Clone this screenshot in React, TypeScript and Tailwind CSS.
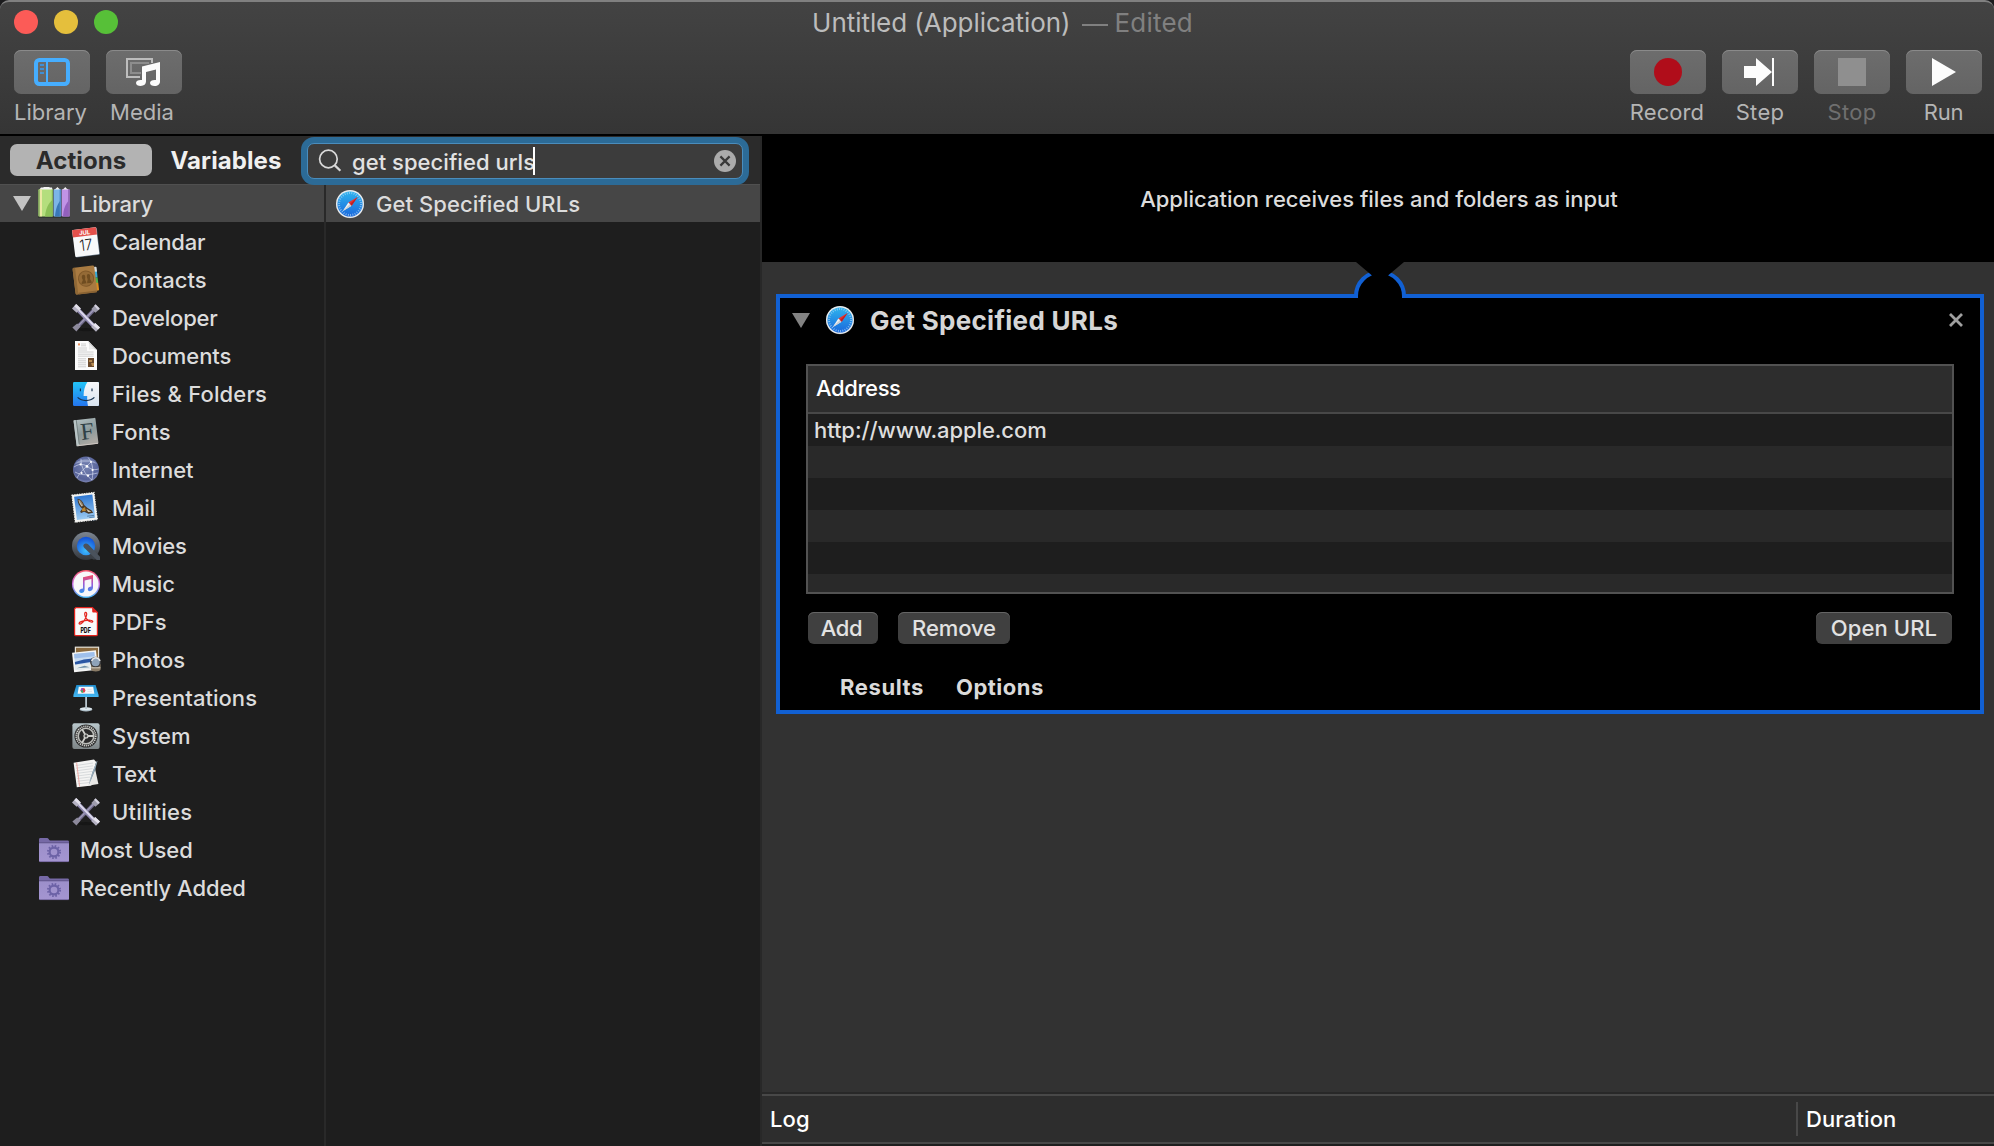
import React from "react";

const iconClass = "h-7 w-7 shrink-0 overflow-visible";

function SafariIcon() {
  return (
    <svg viewBox="0 0 28 28" className={iconClass}>
      <defs>
        <linearGradient id="safariFill" x1="0" y1="0" x2="0" y2="1">
          <stop offset="0" stopColor="#2fb4ee" />
          <stop offset="1" stopColor="#1a68dc" />
        </linearGradient>
      </defs>
      <circle cx="14" cy="14.4" r="14" fill="#8d8d8d" opacity="0.35" />
      <circle cx="14" cy="14" r="14" fill="#e9edf0" />
      <circle cx="14" cy="14" r="12.6" fill="url(#safariFill)" />
      <circle cx="14" cy="14" r="11" fill="none" stroke="#a9d4f5" strokeWidth="2" strokeDasharray="0.9 1.4" opacity="0.75" />
      <path d="M21.6 7 L15.6 15.7 L12.4 12.4 Z" fill="#e8352f" />
      <path d="M6.6 21.2 L12.4 12.4 L15.6 15.7 Z" fill="#f2f2f2" />
      <path d="M6.6 21.2 L14 14 L15.6 15.7 Z" fill="#c9ced4" />
      <path d="M21.6 7 L14 14 L15.6 15.7 Z" fill="#c01f25" />
    </svg>
  );
}

function BooksIcon() {
  return (
    <svg viewBox="0 0 32 32" className="h-8 w-8 shrink-0 overflow-visible">
      <rect x="0" y="28" width="32" height="2" fill="#262b26" opacity="0.6" />
      <path d="M1 2 L3 -0.4 H5 L6 -1 H11 L12 -0.4 H14 L14.6 2 Z" fill="#f4f4f4" />
      <path d="M15.6 2 L18 0.4 L19.4 -1 L21 0.6 L22.6 2 Z M23.5 2 L26 0.4 L27.2 -1 L28.6 0.6 L31 2 Z" fill="#f4f4f4" />
      <rect x="0.4" y="1.4" width="14.6" height="27" rx="0.8" fill="#b4de7d" />
      <rect x="0.4" y="1.4" width="1.4" height="27" fill="#7ea35a" />
      <rect x="1.8" y="1.4" width="2.2" height="27" fill="#ece9a4" />
      <path d="M14.4 12 C10.5 15 7.6 21 7 28.4 H14.4 Z" fill="#8cc057" />
      <rect x="13.8" y="1.4" width="1.2" height="27" fill="#86b358" />
      <rect x="15.6" y="1.4" width="7.4" height="27" rx="0.6" fill="#7cb5e8" />
      <path d="M22 13 C19.5 16 17.6 21 17 28.4 H22 Z" fill="#3a78b8" />
      <rect x="21.6" y="1.4" width="1.6" height="27" fill="#4d8cc9" />
      <rect x="23.7" y="1.4" width="8" height="27" rx="0.6" fill="#c193e6" />
      <path d="M30.4 13 C27.6 16 25.4 21 25 28.4 H30.4 Z" fill="#9360be" />
      <rect x="30.2" y="1.4" width="1.5" height="27" fill="#8d63b2" />
    </svg>
  );
}

function CalendarIcon() {
  return (
    <svg viewBox="0 0 28 28" className={iconClass}>
      <g transform="rotate(-7 14 14)">
        <rect x="2" y="0.8" width="24.4" height="27.4" rx="1" fill="#5d6f80" />
        <rect x="1.6" y="0.4" width="24.2" height="27.2" rx="1" fill="#f8f9fa" />
        <path d="M1.6 1.4 a1 1 0 0 1 1-1 h22.2 a1 1 0 0 1 1 1 V8 H1.6 Z" fill="#e4504b" />
        <text x="13.7" y="6.6" textAnchor="middle" fontFamily="Inter" fontSize="6" fontWeight="700" fill="#fff">JUL</text>
        <text x="13.7" y="22.4" textAnchor="middle" fontFamily="Inter" fontSize="15.5" fontWeight="300" fill="#222" textLength="13" lengthAdjust="spacingAndGlyphs">17</text>
      </g>
    </svg>
  );
}

function ContactsIcon() {
  return (
    <svg viewBox="0 0 28 28" className={iconClass}>
      <g transform="rotate(-7 14 14)">
        <rect x="20" y="2" width="6" height="6" rx="1" fill="#d9dfe2" />
        <rect x="20" y="7" width="5.8" height="6" fill="#39a9d8" />
        <rect x="20" y="13" width="5.8" height="6" fill="#4fb04a" />
        <rect x="20" y="18" width="5.8" height="8" rx="1" fill="#d98d22" />
        <rect x="2" y="0.4" width="21.8" height="27" rx="1.6" fill="#a87a41" />
        <rect x="2" y="0.4" width="2.6" height="27" rx="1.2" fill="#8f6836" />
        <rect x="5" y="25.8" width="18.6" height="1.6" fill="#8a6333" />
        <circle cx="14.2" cy="12.6" r="7.6" fill="#946a36" stroke="#80592a" strokeWidth="1" />
        <path d="M9.2 17.4 C9.2 15 11.2 14.6 10.8 13 C9.6 10.6 10.4 8.4 12 8.4 C13.6 8.4 14.2 10.4 13.2 13 C13 14.6 14 15 14 17.4 Z" fill="#6f4c20" />
        <path d="M14.8 17.4 C14.8 15 16 14.6 15.6 13 C14.8 10.6 15.4 8.4 16.8 8.4 C18.6 8.4 19.2 10.4 18.2 13 C18 14.6 19.6 15 19.4 17.4 Z" fill="#6f4c20" />
      </g>
    </svg>
  );
}

function ToolsIcon() {
  return (
    <svg viewBox="0 0 28 28" className={iconClass}>
      <ellipse cx="14" cy="25.6" rx="9" ry="1.6" fill="#111" opacity="0.6" />
      <path d="M5 23.4 L23 4.8" stroke="#6f6a8a" strokeWidth="3.6" />
      <path d="M5 23 L23 4.4" stroke="#a09bb8" strokeWidth="1.4" />
      <path d="M0.4 23.6 L5.2 19.4 L8.6 22.6 L4.4 27.4 Z" fill="#8d8a9c" />
      <path d="M19.4 5 L23.4 0.4 L27.8 5 L23.4 8.8 Z" fill="#9d9bab" />
      <path d="M23.6 0.2 L27.8 4.4 L26 6 L22.2 1.8 Z" fill="#d3d1dd" />
      <path d="M5 4.8 L23 23.4" stroke="#8e88ae" strokeWidth="4.2" />
      <path d="M5.4 4.4 L23.4 23" stroke="#dcd9ec" strokeWidth="2" />
      <path d="M0 4.4 L4.2 0 L8.8 4.6 L4.6 8.8 Z" fill="#b4b1c2" />
      <path d="M2.2 2.2 L4.2 0 L8.8 4.6 L7 6.4 Z" fill="#e2e0ea" />
      <path d="M19.2 23 L23.2 19 L28 23.6 L24 27.8 Z" fill="#b4b1c2" />
      <path d="M21 21.2 L23.2 19 L28 23.6 L26 25.6 Z" fill="#e6e4ee" />
    </svg>
  );
}

function DocumentsIcon() {
  return (
    <svg viewBox="0 0 28 28" className={iconClass}>
      <path d="M3 -1 H16.4 L25 8 V28 H3 Z" fill="#fbfbfb" />
      <path d="M16 -1 L25 8 C21 6.4 19.4 6.6 17.4 7.4 C18 4.4 17.6 2 16 -1 Z" fill="#cfcfcf" />
      <path d="M17.2 1.4 C18 4 18 5.4 17.4 7.4 C19.6 6.6 21 6.6 23 7.2 Z" fill="#efefef" />
      <rect x="6" y="1.4" width="2" height="2" fill="#e8915c" />
      <path d="M9 2 H14 M9 3.8 H14 M6 6 H15 M6 8 H15 M6 10 H21.6 M6 12.2 H21.6 M6 14.2 H21.6 M6 16.8 H14 M6 18.8 H14 M6 20.8 H14 M6 22.8 H14 M6 24.8 H14" stroke="#cbcbcb" strokeWidth="0.9" />
      <rect x="16" y="16" width="6" height="9" fill="#6b4a2d" />
      <path d="M17 18 h3 v2 h-3 Z M19 21 h3 v3 h-2 Z" fill="#b58a50" />
    </svg>
  );
}

function FinderIcon() {
  return (
    <svg viewBox="0 0 28 28" className={iconClass}>
      <defs>
        <linearGradient id="finderBlue" x1="0" y1="0" x2="0" y2="1">
          <stop offset="0" stopColor="#23c4f7" />
          <stop offset="1" stopColor="#2475ee" />
        </linearGradient>
        <linearGradient id="finderWhite" x1="0" y1="0" x2="0" y2="1">
          <stop offset="0" stopColor="#f7f8fa" />
          <stop offset="1" stopColor="#d8e3ef" />
        </linearGradient>
      </defs>
      <rect x="1" y="2" width="26" height="24" rx="1.2" fill="url(#finderBlue)" />
      <path d="M15.4 2 H25.8 a1.2 1.2 0 0 1 1.2 1.2 V24.8 a1.2 1.2 0 0 1 -1.2 1.2 H16 C15.4 23 15 20 15.2 16 H11.6 C11.6 10.6 12.8 6 15.4 2 Z" fill="url(#finderWhite)" />
      <path d="M8.4 8.6 V11.2" stroke="#16324f" strokeWidth="1.2" />
      <path d="M20 8.6 V11.2" stroke="#16324f" strokeWidth="1.2" />
      <path d="M5.6 17.4 C10 21.6 18 21.6 22.4 17.4" fill="none" stroke="#16324f" strokeWidth="1.2" />
    </svg>
  );
}

function FontsIcon() {
  return (
    <svg viewBox="0 0 28 28" className={iconClass}>
      <defs>
        <linearGradient id="fontBook" x1="0" y1="0" x2="0.3" y2="1">
          <stop offset="0" stopColor="#b3c0c2" />
          <stop offset="0.6" stopColor="#8b999a" />
          <stop offset="1" stopColor="#a9a7a2" />
        </linearGradient>
      </defs>
      <g transform="rotate(-7 14 14)">
        <rect x="3" y="1" width="22" height="26" rx="1" fill="url(#fontBook)" />
        <rect x="3" y="1" width="2.6" height="26" fill="#b9c5c6" />
        <path d="M5.8 1 V25" stroke="#6c797a" strokeWidth="0.8" />
        <path d="M4 26.6 H24.6" stroke="#cfc7c2" strokeWidth="1" />
        <text x="15.2" y="21.4" textAnchor="middle" fontFamily="Liberation Serif" fontSize="24" fill="#2f4146" textLength="13.4" lengthAdjust="spacingAndGlyphs">F</text>
      </g>
    </svg>
  );
}

function InternetIcon() {
  return (
    <svg viewBox="0 0 28 28" className={iconClass}>
      <defs>
        <radialGradient id="globeFill" cx="0.5" cy="0.4" r="0.7">
          <stop offset="0" stopColor="#7784b2" />
          <stop offset="0.7" stopColor="#57639a" />
          <stop offset="1" stopColor="#a2a5c8" />
        </radialGradient>
      </defs>
      <circle cx="14" cy="13.4" r="13" fill="url(#globeFill)" />
      <path d="M3 8 C7 2 21 2 25 8 C21 5.6 8 6 3 8 Z" fill="#a9b4d4" opacity="0.7" />
      <path d="M2 11 C8 7 12 8 16 11 C20 14 23 14 26.6 13 M5 22 C8 16 12 13 20 5 M9 3 C9 10 12 18 20 24 M3 16 C10 20 17 19 25.6 17 M16 1.4 C20 6 22 12 20 24" fill="none" stroke="#d9e0f4" strokeWidth="0.8" opacity="0.8" />
      <g fill="#fff">
        <circle cx="15" cy="10.4" r="1.3" /><circle cx="8.6" cy="8.4" r="1.1" /><circle cx="20.6" cy="14" r="1.1" />
        <circle cx="9.6" cy="17" r="1" /><circle cx="16" cy="19.6" r="1.2" /><circle cx="19" cy="6" r="0.9" />
      </g>
    </svg>
  );
}

function MailIcon() {
  return (
    <svg viewBox="0 0 28 28" className={iconClass}>
      <defs>
        <linearGradient id="mailSky" x1="0" y1="0" x2="0" y2="1">
          <stop offset="0" stopColor="#2f78d2" />
          <stop offset="1" stopColor="#9dcbf2" />
        </linearGradient>
      </defs>
      <circle cx="20.6" cy="20.4" r="6.4" fill="none" stroke="#1c2a3a" strokeWidth="1" />
      <g transform="rotate(-7 13 13)">
        <rect x="1.4" y="-0.4" width="22.4" height="27.4" fill="#f3f3f0" stroke="#f3f3f0" strokeWidth="1" strokeDasharray="1.4 1" />
        <rect x="3.4" y="1.6" width="18.4" height="23.4" fill="url(#mailSky)" />
        <path d="M6.6 4 C9.4 4.4 11.6 7 12.4 11 L15.4 14.4 L19 17 L20.4 19.6 L15.6 20 L11.6 17.6 L8.4 18.4 L7.6 17 L10 14.4 C7.4 11.6 6 7.6 6.6 4 Z" fill="#4a3825" />
        <path d="M7.4 5 C9.8 6 11 8.6 11.4 11.6 L9.8 12 C8.4 10 7.4 8 7.4 5 Z M14 15 L18.8 18.4 L15.4 18.4 Z" fill="#cfc5b0" />
        <path d="M8.4 5.8 L10.8 11.4 M9.6 6.6 L11.6 11" stroke="#6a563c" strokeWidth="0.6" />
        <path d="M9.8 14.4 L13 13 L13.4 17 L9.6 16.8 Z" fill="#b9842f" />
        <path d="M14 22.4 H21 M16 24 H21" stroke="#537ca6" strokeWidth="0.9" />
      </g>
    </svg>
  );
}

function MoviesIcon() {
  return (
    <svg viewBox="0 0 28 28" className={iconClass}>
      <defs>
        <linearGradient id="qtRing" x1="0" y1="0" x2="0" y2="1">
          <stop offset="0" stopColor="#7c8591" />
          <stop offset="1" stopColor="#33373d" />
        </linearGradient>
        <radialGradient id="qtBlue" cx="0.5" cy="0.75" r="0.7">
          <stop offset="0" stopColor="#3fc0ff" />
          <stop offset="1" stopColor="#1554d8" />
        </radialGradient>
      </defs>
      <circle cx="14" cy="14" r="14" fill="url(#qtRing)" />
      <path d="M20 19 L28 27.6 H21 L15 22 Z" fill="#3b4047" />
      <circle cx="14" cy="14" r="9.2" fill="url(#qtBlue)" />
      <path d="M11.8 12.6 C13 11 15 11.2 16.4 12.6 L28 24.8 V28 H24.8 L12.2 15.8 C11.2 14.6 11 13.6 11.8 12.6 Z" fill="#4a525c" />
    </svg>
  );
}

function MusicIcon() {
  return (
    <svg viewBox="0 0 28 28" className={iconClass}>
      <defs>
        <linearGradient id="musicRing" x1="0.5" y1="0" x2="0.5" y2="1">
          <stop offset="0" stopColor="#fb5b6c" />
          <stop offset="0.5" stopColor="#c56be6" />
          <stop offset="1" stopColor="#3fb7f3" />
        </linearGradient>
        <linearGradient id="musicNote" x1="0.5" y1="0" x2="0.5" y2="1">
          <stop offset="0" stopColor="#f4495f" />
          <stop offset="0.5" stopColor="#9a5ad8" />
          <stop offset="1" stopColor="#2f95f0" />
        </linearGradient>
      </defs>
      <circle cx="14" cy="14" r="14" fill="url(#musicRing)" />
      <circle cx="14" cy="14" r="12.6" fill="#f7f7fa" />
      <path d="M11 7.2 L21 5 V17.6 C21 19.8 19.4 21.2 17.8 21.2 C16.6 21.2 15.8 20.2 15.8 19.2 C15.8 17.6 17.6 16.9 19.4 16.6 V9 L12.6 10.6 V19.4 C12.6 21.6 11 23 9.4 23 C8.2 23 7.2 22 7.2 21 C7.2 19.4 9 18.7 11 18.4 Z" fill="url(#musicNote)" />
    </svg>
  );
}

function PdfIcon() {
  return (
    <svg viewBox="0 0 28 28" className={iconClass}>
      <path d="M4 -0.4 H20.4 L25.4 4.6 V26.6 a1 1 0 0 1 -1 1 H3.6 a1 1 0 0 1 -1 -1 V0.8 Z" fill="#fafafa" stroke="#e3231d" strokeWidth="1.2" />
      <path d="M20.2 -0.4 V3.6 a1 1 0 0 0 1 1 H25.4 Z" fill="#e3231d" />
      <path d="M13.6 4.4 C15.6 4.4 14.6 9 12.8 11.6 C11.4 14 8.4 17 7.2 15.8 C6.4 14.6 9.6 13 13 12.6 C16.4 12 21 12 20.8 13.6 C20.4 15.2 16.6 13.4 14.6 11 C12.8 8.6 12 4.6 13.6 4.4 Z" fill="none" stroke="#e3231d" strokeWidth="1.2" />
      <text x="13.6" y="24.6" textAnchor="middle" fontFamily="Inter" fontSize="7" fontWeight="800" fill="#111" textLength="10.4" lengthAdjust="spacingAndGlyphs">PDF</text>
    </svg>
  );
}

function PhotosIcon() {
  return (
    <svg viewBox="0 0 28 28" className={iconClass}>
      <rect x="3.4" y="1.2" width="23.2" height="18" fill="#8b6a3e" stroke="#e8e4da" strokeWidth="1.2" />
      <g transform="translate(0 -1) rotate(-6 13 16)">
        <rect x="1" y="6.4" width="24" height="19.6" fill="#f4f5f5" />
        <rect x="2.8" y="8" width="20.4" height="16" fill="#c8dcf2" />
        <path d="M2.8 8 H23.2 V12.4 H2.8 Z" fill="#9fc0ec" />
        <path d="M2.8 16 L12 14.4 L23.2 14.2 V17.4 L2.8 18.4 Z" fill="#2a57a4" />
        <path d="M2.8 19.2 L23.2 18 V24 H2.8 Z" fill="#e6edee" />
        <path d="M4 22.4 L12 20.6 L17 22.6 Z" fill="#6f90a9" />
      </g>
      <path d="M19 18 V23.6 C19 26.2 28.4 26.2 28.6 23.6 V18 Z" fill="#8a7b66" />
      <circle cx="23.6" cy="16.2" r="4.8" fill="#8fa3b9" stroke="#3c3c3e" strokeWidth="1.4" />
      <path d="M19.6 15 C21 10.6 26.4 10.6 28 15" fill="none" stroke="#e4e6e8" strokeWidth="1.4" />
      <path d="M19.2 21.8 H28.4" stroke="#d7cfc0" strokeWidth="1" />
    </svg>
  );
}

function PresentationsIcon() {
  return (
    <svg viewBox="0 0 28 28" className={iconClass}>
      <defs>
        <linearGradient id="keynoteTop" x1="0" y1="0" x2="0" y2="1">
          <stop offset="0" stopColor="#1f8ccd" />
          <stop offset="1" stopColor="#45b8f3" />
        </linearGradient>
      </defs>
      <ellipse cx="14" cy="25.4" rx="6.4" ry="2" fill="#aebfc9" />
      <ellipse cx="14" cy="24.8" rx="6" ry="1.5" fill="#dfe9ee" />
      <rect x="13.2" y="12" width="1.8" height="13" fill="#b9c6ce" />
      <path d="M4.4 1 H23.6 L26.6 11 V13 H1.4 V11 Z" fill="url(#keynoteTop)" />
      <path d="M6.8 2.8 H21.2 L22.4 9.8 H5.6 Z" fill="#f4f8fa" />
      <circle cx="11" cy="6.4" r="2.4" fill="#e5434a" />
      <path d="M8.6 6.4 A2.4 2.4 0 0 1 11 4 V6.4 Z" fill="#8b55cf" />
      <path d="M8.6 6.4 H11 V8.8 A2.4 2.4 0 0 1 8.6 6.4 Z" fill="#38b56a" />
      <path d="M15.4 5.4 H19.6 M15.4 7.4 H20" stroke="#d5e0e7" strokeWidth="0.8" />
    </svg>
  );
}

function SystemIcon() {
  return (
    <svg viewBox="0 0 28 28" className={iconClass}>
      <defs>
        <linearGradient id="systemPlate" x1="0" y1="0" x2="0" y2="1">
          <stop offset="0" stopColor="#b9c7cc" />
          <stop offset="1" stopColor="#7d8486" />
        </linearGradient>
      </defs>
      <rect x="0.4" y="1.2" width="27.2" height="25.8" rx="2" fill="url(#systemPlate)" />
      <circle cx="14" cy="14" r="11.6" fill="#2b2b2b" />
      <circle cx="14" cy="14" r="9.7" fill="none" stroke="#cfd0cd" strokeWidth="1.8" strokeDasharray="1.2 0.83" />
      <circle cx="14" cy="14" r="7.8" fill="none" stroke="#bcbdb9" strokeWidth="1.6" />
      <path d="M14 14 H21.4 M14 14 L10.2 7.4 M14 14 L10.2 20.6" stroke="#d0d1cd" strokeWidth="1.8" />
      <circle cx="14" cy="14" r="2" fill="#4a4a4a" stroke="#d0d1cd" strokeWidth="1.2" />
    </svg>
  );
}

function TextIcon() {
  return (
    <svg viewBox="0 0 28 28" className={iconClass}>
      <path d="M22 4 L26.4 24 L14 26 Z" fill="#e8e8e6" />
      <path d="M1.6 2.8 L22 -0.4 L24.2 2 L17.4 24 L19.8 25.4 L4.8 27.2 Z" fill="#f4f4f3" />
      <path d="M3.6 5.6 L21 3 M4 8.2 L21 5.8 M4.3 10.8 L20.6 8.6 M4.6 13.4 L20 11.4 M4.9 16 L19.2 14.2 M5.2 18.6 L18.4 17 M5.5 21.2 L17.8 19.8 M5.8 23.8 L17 22.6" stroke="#cfd3d5" strokeWidth="0.8" />
      <path d="M4.6 2.6 L7.6 26.6" stroke="#ec9a94" strokeWidth="0.8" />
      <path d="M25.2 0.6 L23.6 9 L16.6 25.6 L20.4 12 Z" fill="#6f8798" />
      <path d="M25 1.4 L18 21" stroke="#a4b7c3" strokeWidth="0.9" />
    </svg>
  );
}

function FolderIcon() {
  return (
    <svg viewBox="0 0 32 28" className="h-7 w-8 shrink-0 overflow-visible">
      <defs>
        <linearGradient id="folderFront" x1="0" y1="0" x2="0" y2="1">
          <stop offset="0" stopColor="#9c8fca" />
          <stop offset="1" stopColor="#a495d1" />
        </linearGradient>
      </defs>
      <path d="M1 3.4 a1.4 1.4 0 0 1 1.4 -1.4 H9.4 C10.6 2 11 4.6 12.4 4.6 H29.6 a1.4 1.4 0 0 1 1.4 1.4 V10 H1 Z" fill="#7669a6" />
      <path d="M1 7 H31 V24.8 a1 1 0 0 1 -1 1 H2 a1 1 0 0 1 -1 -1 Z" fill="url(#folderFront)" />
      <path d="M1 6.8 H31" stroke="#5f5488" strokeWidth="0.9" />
      <path d="M1.4 25.6 H30.6" stroke="#7a6ca8" strokeWidth="0.7" />
      <circle cx="16" cy="16" r="6.1" fill="none" stroke="#6c62a6" strokeWidth="1.9" strokeDasharray="1.6 1.594" />
      <circle cx="16" cy="16" r="4.4" fill="none" stroke="#6c62a6" strokeWidth="2.2" />
    </svg>
  );
}

const categories: { label: string; Icon: () => React.JSX.Element; tracking?: string }[] = [
  { label: "Calendar", Icon: CalendarIcon, tracking: "tracking-[-0.2px]" },
  { label: "Contacts", Icon: ContactsIcon },
  { label: "Developer", Icon: ToolsIcon, tracking: "tracking-[-0.2px]" },
  { label: "Documents", Icon: DocumentsIcon, tracking: "tracking-[-0.06px]" },
  { label: "Files & Folders", Icon: FinderIcon, tracking: "tracking-[0.15px]" },
  { label: "Fonts", Icon: FontsIcon, tracking: "tracking-[0.2px]" },
  { label: "Internet", Icon: InternetIcon, tracking: "tracking-[-0.04px]" },
  { label: "Mail", Icon: MailIcon, tracking: "tracking-[-0.1px]" },
  { label: "Movies", Icon: MoviesIcon, tracking: "tracking-[-0.2px]" },
  { label: "Music", Icon: MusicIcon, tracking: "tracking-[-0.1px]" },
  { label: "PDFs", Icon: PdfIcon, tracking: "tracking-[-0.1px]" },
  { label: "Photos", Icon: PhotosIcon },
  { label: "Presentations", Icon: PresentationsIcon, tracking: "tracking-[0.03px]" },
  { label: "System", Icon: SystemIcon },
  { label: "Text", Icon: TextIcon, tracking: "tracking-[-0.3px]" },
  { label: "Utilities", Icon: ToolsIcon, tracking: "tracking-[0.23px]" },
];

function ToolbarButton({ label, labelClass = "", children }: { label: string; labelClass?: string; children: React.ReactNode }) {
  return (
    <div className="flex w-[76px] flex-col items-center">
      <button className="flex h-11 w-full items-center justify-center rounded-[7px] bg-linear-to-b from-[#6d6d6d] to-[#646464] shadow-[inset_0_1px_0_#8a8a8a]">
        {children}
      </button>
      <span className={`mt-1 h-7 whitespace-nowrap leading-[28px] font-normal ${labelClass}`}>{label}</span>
    </div>
  );
}

function Toolbar() {
  return (
    <header className="h-[136px] shrink-0 bg-[#1b1b1d]">
      <div className="flex h-full flex-col rounded-t-[9px] border-t-2 border-b-2 border-t-[#808080] border-b-black bg-linear-to-b from-[#434343] to-[#353535]">
        <div className="grid h-12 shrink-0 grid-cols-[1fr_auto_1fr] items-start">
          <div className="flex gap-4 pt-2 pl-[14px]">
            <span className="h-6 w-6 rounded-full bg-[#fc5b57]" />
            <span className="h-6 w-6 rounded-full bg-[#e5bf3c]" />
            <span className="h-6 w-6 rounded-full bg-[#57c038]" />
          </div>
          <h1 className="flex gap-[10px] pt-[5px] pl-[11px] text-[26px] leading-[32px] font-normal whitespace-nowrap">
            <span className="tracking-[-0.05px] text-[#bcbcbc]">Untitled (Application)</span>
            <span className="flex items-center gap-[7px] text-[#808080]">
              <span className="mt-[3px] ml-px h-[2px] w-[26px] bg-[#808080]" />
              <span className="tracking-[0.2px]">Edited</span>
            </span>
          </h1>
          <div />
        </div>
        <div className="flex justify-between pr-3 pl-[14px]">
          <div className="flex gap-4">
            <ToolbarButton label="Library" labelClass="text-[#b5b5b5] -ml-[3px]">
              <svg width="36" height="28" viewBox="0 0 36 28">
                <rect x="2" y="2" width="32" height="24" rx="3.4" fill="none" stroke="#46aeff" strokeWidth="4" />
                <path d="M13 3 V25" stroke="#46aeff" strokeWidth="2" />
                <path d="M6 7 H10 M6 11 H10 M6 15 H10" stroke="#3f8fd4" strokeWidth="1.8" />
              </svg>
            </ToolbarButton>
            <ToolbarButton label="Media" labelClass="text-[#b5b5b5] -ml-1">
              <svg width="36" height="30" viewBox="0 0 36 30" className="-ml-[2px]">
                <path d="M27 6 V2 H2 V20 H15" fill="none" stroke="#bdbdbd" strokeWidth="2" />
                <path d="M23 7 V6 H6 V16 H16" fill="none" stroke="#8d8d8d" strokeWidth="2" />
                <path d="M17 9.6 L35 5 V24.4 C35 27 33 29 29.6 29 C27 29 25 28 25 26 C25 24 27 23 29.6 23 H31 V12.4 L21 15 V24.6 C21 27.4 19 29 15.6 29 C13 29 11 28 11 26 C11 24 13 23 15.6 23 H17 Z" fill="#fcfcfc" />
              </svg>
            </ToolbarButton>
          </div>
          <div className="flex gap-4">
            <ToolbarButton label="Record" labelClass="text-[#b5b5b5] tracking-[0.1px] -ml-[2px]">
              <span className="h-7 w-7 rounded-full bg-[#b00d1a]" />
            </ToolbarButton>
            <ToolbarButton label="Step" labelClass="text-[#b5b5b5] tracking-[0.3px]">
              <svg width="30" height="28" viewBox="0 0 30 28" className="-ml-[2px]">
                <path d="M0 8 H12 V0 L28 14 L12 28 V20 H0 Z M28 0 H30 V28 H28 Z" fill="#fcfcfc" />
              </svg>
            </ToolbarButton>
            <ToolbarButton label="Stop" labelClass="text-[#6f6f6f] tracking-[0.3px]">
              <span className="h-7 w-7 bg-[#8f8f8f]" />
            </ToolbarButton>
            <ToolbarButton label="Run" labelClass="text-[#b5b5b5] tracking-[-0.2px] -ml-px">
              <svg width="24" height="28" viewBox="0 0 24 28">
                <path d="M0 0 L24 14 L0 28 Z" fill="#fcfcfc" />
              </svg>
            </ToolbarButton>
          </div>
        </div>
      </div>
    </header>
  );
}

function SearchField() {
  return (
    <div className="relative z-10 -mb-[2px] flex h-12 w-[448px] rounded-[13px] bg-[#2c6b97] p-[6px]">
      <div className="flex flex-1 items-center rounded-[7px] border border-[#4a8dbd] bg-[#3c3c3c] pr-[6px] pl-[10px]">
        <svg width="24" height="24" viewBox="0 0 24 24" fill="none" stroke="#d9d9d9" strokeWidth="1.7">
          <circle cx="10.4" cy="10" r="8.8" />
          <path d="M16.8 16.4 L22.4 21.8" strokeWidth="2.2" />
        </svg>
        <span className="ml-[10px] pt-[2px] tracking-[0.04px] whitespace-nowrap text-[#e2e2e2]">get specified urls</span>
        <span className="-ml-[2px] h-7 w-[2px] bg-white" />
        <svg width="22" height="22" viewBox="0 0 22 22" className="ml-auto">
          <circle cx="11" cy="11" r="11" fill="#ababab" />
          <path d="M6.4 6.4 L15.6 15.6 M15.6 6.4 L6.4 15.6" stroke="#3a3a3a" strokeWidth="2.2" />
        </svg>
      </div>
    </div>
  );
}

function LibraryPane() {
  return (
    <aside className="flex w-[762px] shrink-0 flex-col border-r-2 border-[#282828] bg-[#1e1e1e]">
      <div className="flex h-12 shrink-0 bg-[#2b2b2b]">
        <button className="mt-2 ml-[10px] h-8 w-[142px] rounded-[7px] bg-[#b3b3b3] pt-px text-[24px] leading-[31px] font-bold tracking-[0.1px] text-[#2b2b2b]">
          Actions
        </button>
        <button className="mt-2 mr-[19px] ml-[18px] h-8 w-[112px] pt-px text-[24px] leading-[31px] font-bold tracking-[0.1px] whitespace-nowrap text-[#f0f0f0]">
          Variables
        </button>
        <div className="pt-px">
          <SearchField />
        </div>
      </div>
      <div className="flex flex-1 text-[#dcdcdc]">
        <nav className="w-[326px] shrink-0 border-r-2 border-[#292929]">
          <div className="flex h-[38px] items-center border-t border-[#505050] bg-[#464646] pl-[13px]">
            <svg width="18" height="15" viewBox="0 0 18 15">
              <path d="M0 0 H18 L9 15 Z" fill="#c3c3c3" />
            </svg>
            <span className="w-[7px]" />
            <BooksIcon />
            <span className="ml-[10px] tracking-[-0.15px]">Library</span>
          </div>
          {categories.map(({ label, Icon, tracking }) => (
            <div key={label} className="flex h-[38px] items-center pt-px pl-[72px]">
              <Icon />
              <span className={`ml-3 whitespace-nowrap ${tracking ?? ""}`}>{label}</span>
            </div>
          ))}
          {["Most Used", "Recently Added"].map((label) => (
            <div key={label} className="flex h-[38px] items-center pt-px pl-[38px]">
              <FolderIcon />
              <span className="ml-[10px] tracking-[-0.05px] whitespace-nowrap">{label}</span>
            </div>
          ))}
        </nav>
        <div className="flex-1">
          <div className="flex h-[38px] items-center border-t border-[#505050] bg-[#464646] pl-[10px]">
            <SafariIcon />
            <span className="ml-3 tracking-[0.07px] whitespace-nowrap">Get Specified URLs</span>
          </div>
        </div>
      </div>
    </aside>
  );
}

function PushButton({ className, children }: { className: string; children: React.ReactNode }) {
  return (
    <button className={`h-8 rounded-[6px] bg-[#404040] leading-[32px] whitespace-nowrap text-[#e2e2e2] shadow-[inset_0_1px_0_#656565] ${className}`}>
      {children}
    </button>
  );
}

function ActionCard() {
  return (
    <section className="relative mt-8 mr-[10px] ml-[14px] flex h-[420px] flex-col border-4 border-[#1160d3] bg-black">
      <svg width="60" height="40" viewBox="0 0 60 40" className="absolute -top-9 left-[570px]">
        <path d="M6 40 V34 A24 24 0 0 1 54 34 V40 Z" fill="#000" />
        <path d="M6 36 V34 A24 24 0 0 1 54 34 V36" fill="none" stroke="#1160d3" strokeWidth="4" />
        <path d="M6 0 H54 L38 13.6 V16 H22 V13.6 Z" fill="#000" />
      </svg>
      <div className="flex h-[66px] items-start pr-[17px] pl-3">
        <svg width="18" height="15" viewBox="0 0 18 15" className="mt-[15px]">
          <path d="M0 0 H18 L9 15 Z" fill="#828282" />
        </svg>
        <span className="mt-2 ml-4">
          <SafariIcon />
        </span>
        <h2 className="mt-[7px] ml-4 text-[26px] leading-[32px] font-bold tracking-[0.28px] text-[#d6d6d6]">Get Specified URLs</h2>
        <svg width="14" height="14" viewBox="0 0 14 14" className="mt-[15px] ml-auto">
          <path d="M1 1 L13 13 M13 1 L1 13" stroke="#a0a0a0" strokeWidth="2.8" />
        </svg>
      </div>
      <div className="mr-[26px] ml-[26px] h-[230px] overflow-hidden border-2 border-[#525252]">
        <div className="h-12 border-b-2 border-[#484848] bg-[#2d2d2d] pl-2 leading-[44px] font-medium tracking-[-0.4px] text-white">Address</div>
        <div className="h-8 bg-[#1e1e1e] pl-[6px] leading-[32px] tracking-[-0.08px] text-[#dedede]">http://www.apple.com</div>
        <div className="h-8 bg-[#292929]" />
        <div className="h-8 bg-[#1e1e1e]" />
        <div className="h-8 bg-[#292929]" />
        <div className="h-8 bg-[#1e1e1e]" />
        <div className="h-8 bg-[#292929]" />
      </div>
      <div className="mt-[18px] mr-7 ml-7 flex">
        <PushButton className="w-[70px] pr-[3px] tracking-[-0.4px]">Add</PushButton>
        <PushButton className="ml-5 w-28 tracking-[-0.1px]">Remove</PushButton>
        <PushButton className="ml-auto w-[136px] tracking-[0.1px]">Open URL</PushButton>
      </div>
      <div className="mt-[29px] flex gap-[32px] pl-[60px] leading-[29px] font-bold text-[#dadada]">
        <span className="tracking-[0.59px]">Results</span>
        <span className="tracking-[0.5px]">Options</span>
      </div>
    </section>
  );
}

function Workflow() {
  return (
    <main className="flex min-w-0 flex-1 flex-col bg-[#323232]">
      <div className="flex h-[126px] shrink-0 justify-center bg-black pt-[49px] pl-[2px] leading-[28px] text-[#dcdcdc]">
        Application receives files and folders as input
      </div>
      <ActionCard />
      <div className="mt-auto h-[54px] shrink-0 border-t-2 border-[#282828] bg-[#1e1e1e]">
        <div className="flex h-[50px] items-center border-t-2 border-b-2 border-[#484848] bg-[#2d2d2d] pb-px font-medium text-white">
          <span className="flex-1 pl-2 tracking-[0.14px]">Log</span>
          <span className="flex h-[34px] w-[198px] items-center border-l-2 border-[#484848] pl-2 tracking-[0.1px]">Duration</span>
        </div>
      </div>
    </main>
  );
}

export default function App() {
  return (
    <div className="flex h-[1146px] w-[1994px] flex-col overflow-hidden bg-[#1e1e1e] font-['Inter',sans-serif] text-[22px] leading-[28px] font-[450]">
      <Toolbar />
      <div className="flex min-h-0 flex-1">
        <LibraryPane />
        <Workflow />
      </div>
    </div>
  );
}
